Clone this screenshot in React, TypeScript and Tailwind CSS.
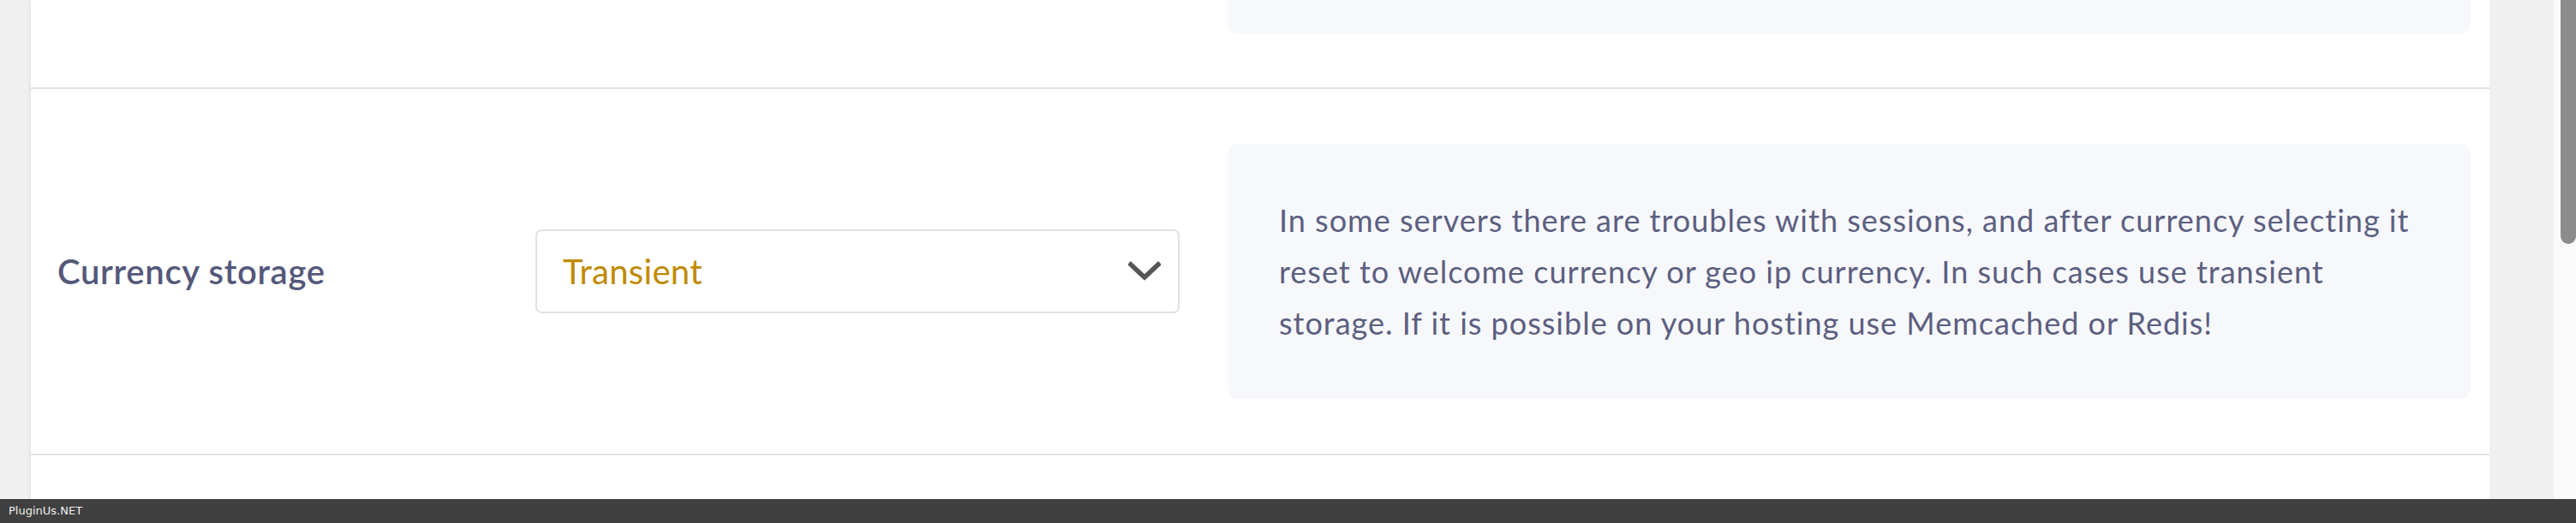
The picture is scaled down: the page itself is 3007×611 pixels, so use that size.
import React from "react";

export default function App() {
  const font = { fontFamily: "Lato, 'Noto Sans', sans-serif" };
  return (
    <div className="flex h-[611px] w-[3007px] flex-col overflow-hidden bg-[#f0f0f0]" style={font}>
      <div className="flex min-h-0 flex-1">
        <div className="w-[36px] shrink-0 bg-[#f0f0f0]" />
        <div className="flex w-[2870px] shrink-0 flex-col bg-white shadow-[0_0_5px_rgba(0,0,0,0.10)]">
          {/* previous row (cut off) */}
          <div className="border-b-2 border-[#dfe3e8] pb-[62px] pl-[1397px] pr-[22px]">
            <div className="h-[40px] rounded-b-[12px] bg-[#f7f8fc]" />
          </div>
          {/* currency storage row */}
          <div className="flex items-center border-b-2 border-[#dfe3e8] py-[64px] pl-[31px] pr-[22px]">
            <div className="w-[558px] shrink-0 text-[40px] font-semibold leading-none tracking-[0.7px] text-[#54587a]">
              Currency storage
            </div>
            <div className="flex h-[98px] w-[752px] shrink-0 items-center justify-between rounded-[7px] border-2 border-[#dfe2e6] bg-white pl-[30px] pr-[20px]">
              <span className="text-[40px] leading-none tracking-[0.3px] text-[#c08a00]">Transient</span>
              <svg width="38" height="24" viewBox="0 0 38 24" fill="none">
                <path d="M3 4 L19 19 L35 4" stroke="#555555" strokeWidth="5.5" strokeLinecap="square" />
              </svg>
            </div>
            <div className="ml-[56px] flex-1 rounded-[12px] bg-[#f7f8fc] pl-[60px] pr-[56px] py-[59px] text-[36px] leading-[60px] tracking-[1px] text-[#5c5f80]">
              In some servers there are troubles with sessions, and after currency selecting it reset to welcome currency or geo ip currency. In such cases use transient storage. If it is possible on your hosting use Memcached or Redis!
            </div>
          </div>
          <div className="flex-1" />
        </div>
        <div className="w-[75px] shrink-0 bg-[#f0f0f0]" />
        <div className="relative w-[26px] shrink-0 bg-[#fafafa]">
          <div className="absolute left-[8px] top-0 h-[285px] w-[18px] rounded-b-[9px] bg-[#8c8c8c]" />
        </div>
      </div>
      <div className="flex h-[28px] shrink-0 items-center bg-[#404040] pl-[10px]">
        <span className="text-[13px] text-[#f0f0f0]" style={{ fontFamily: "'DejaVu Sans', sans-serif" }}>
          PluginUs.NET
        </span>
      </div>
    </div>
  );
}
